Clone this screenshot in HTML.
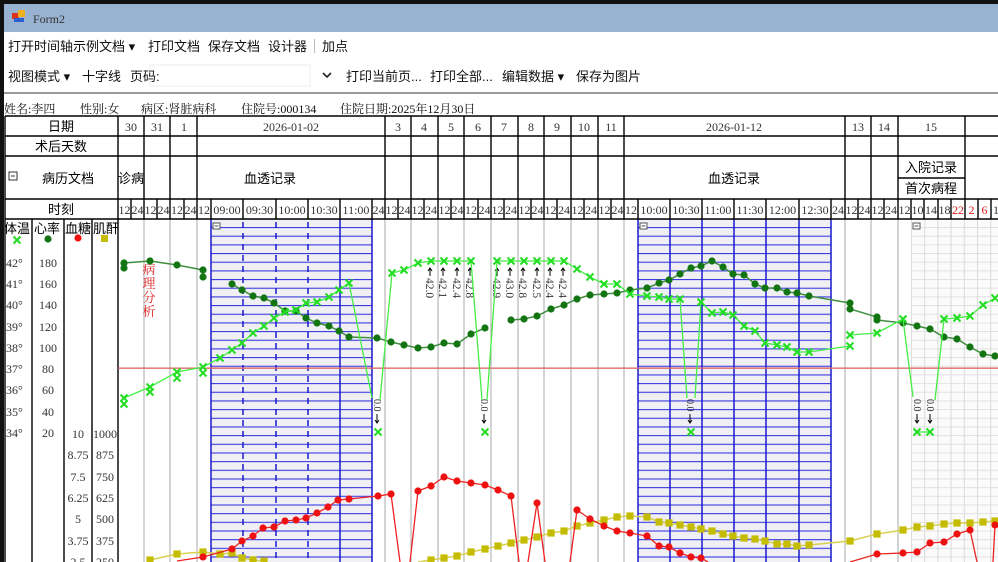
<!DOCTYPE html>
<html><head><meta charset="utf-8"><style>
html,body{margin:0;padding:0;background:#fff;}
body{width:998px;height:562px;overflow:hidden;position:relative;}
svg{position:absolute;left:0;top:0;}
.ui{font-family:"Liberation Sans","Noto Sans CJK SC",sans-serif;font-size:13px;fill:#111;}
.sr{font-family:"Liberation Serif","Noto Serif CJK SC",serif;font-size:12px;fill:#333;}
.hd{font-family:"Liberation Sans","Noto Sans CJK SC",sans-serif;font-size:13px;fill:#000;}
</style></head><body>
<svg width="998" height="562" viewBox="0 0 998 562" xmlns="http://www.w3.org/2000/svg">
<defs>
<pattern id="hb" x="0" y="227" width="10" height="8.67" patternUnits="userSpaceOnUse">
<rect width="10" height="8.67" fill="#f0f0f4"/><rect y="0" width="10" height="1.1" fill="#3a3ae0"/></pattern>
<pattern id="lg" x="911" y="227" width="13.2" height="8.67" patternUnits="userSpaceOnUse">
<rect width="13.2" height="8.67" fill="#fbfbfb"/><rect width="13.2" height="1" fill="#e2e2e2"/><rect width="1" height="8.67" fill="#dcdcdc"/></pattern>
<g id="x"><path d="M-3.5,-3.5L3.5,3.5M3.5,-3.5L-3.5,3.5" stroke="#22dd22" stroke-width="2"/></g>
<circle id="d" r="3.6" fill="#127512"/>
<circle id="r" r="3.6" fill="#ee1111"/>
<rect id="s" x="-3.6" y="-3.6" width="7.2" height="7.2" fill="#c4bc00"/>
<g id="ar"><path d="M0,-4V4M-2,-1L0,-4L2,-1" stroke="#000" stroke-width="1" fill="none"/></g>
</defs>
<rect x="0" y="0" width="998" height="4" fill="#111"/>
<rect x="0" y="0" width="4" height="562" fill="#111"/>
<rect x="4" y="4" width="994" height="28" fill="#98b3d1"/>
<rect x="12" y="13" width="7" height="6" fill="#e03020"/><rect x="18" y="10" width="7" height="7" fill="#f0b020"/><rect x="14" y="18" width="10" height="4" fill="#3060d0"/>
<text x="33" y="23" font-family="Liberation Serif,serif" font-size="12" fill="#333">Form2</text>
<text class="ui" x="8" y="51">打开时间轴示例文档 ▾</text>
<text class="ui" x="148" y="51">打印文档</text>
<text class="ui" x="208" y="51">保存文档</text>
<text class="ui" x="268" y="51">设计器</text>
<rect x="314" y="39" width="1" height="14" fill="#bbb"/>
<text class="ui" x="322" y="51">加点</text>
<text class="ui" x="8" y="81">视图模式 ▾</text>
<text class="ui" x="82" y="81">十字线</text>
<rect x="150" y="65" width="160" height="21" fill="#fff" stroke="#eee"/>
<text class="ui" x="130" y="81">页码:</text>
<path d="M323,73l4,4l4,-4" stroke="#222" stroke-width="1.6" fill="none"/>
<text class="ui" x="346" y="81">打印当前页...</text>
<text class="ui" x="430" y="81">打印全部...</text>
<text class="ui" x="502" y="81">编辑数据 ▾</text>
<text class="ui" x="576" y="81">保存为图片</text>
<rect x="4" y="92" width="994" height="2" fill="#999"/>
<g font-family="Liberation Serif,'Noto Serif CJK SC',serif" font-size="12" fill="#111">
<text x="4" y="113">姓名:李四</text><text x="80" y="113">性别:女</text><text x="141" y="113">病区:肾脏病科</text>
<text x="241" y="113">住院号:000134</text><text x="340" y="113">住院日期:2025年12月30日</text></g>
<rect x="211" y="219" width="161" height="343" fill="url(#hb)"/>
<rect x="638" y="219" width="193" height="343" fill="url(#hb)"/>
<rect x="911" y="219" width="87" height="343" fill="url(#lg)"/>
<g stroke="#aaa" stroke-width="1">
<path d="M144,219V562M170,219V562M197,219V562M385,219V562M411,219V562M438,219V562M464,219V562M491,219V562M518,219V562M544,219V562M571,219V562M598,219V562M624,219V562M845,219V562M871,219V562M898,219V562"/></g>
<g stroke="#1a1acc" stroke-width="1.5">
<path d="M211,219V562M340,219V562M372,219V562M638,219V562M670,219V562M702,219V562M734,219V562M766,219V562M799,219V562M831,219V562"/>
<path d="M243,222V562M276,222V562M308,222V562" stroke-dasharray="6,5"/></g>
<g fill="#fff" stroke="#555" stroke-width="1"><rect x="213" y="223" width="7" height="6"/><rect x="640" y="223" width="7" height="6"/><rect x="913" y="223" width="7" height="6"/></g>
<path d="M214.5,226h4M641.5,226h4M914.5,226h4" stroke="#555"/>
<g stroke="#000" stroke-width="1.4" fill="none">
<path d="M5,116H998M5,136H998M5,156H998M5,199H998M5,219H998"/>
<path d="M5,116V562M118,116V562M32,219V562M64,219V562M92,219V562"/>
<path d="M144,116V219M170,116V219M197,116V219M385,116V219M411,116V219M438,116V219M464,116V219M491,116V219M518,116V219M544,116V219M571,116V219M598,116V219M624,116V219M845,116V219M871,116V219M898,116V219M965,116V219"/>
<path d="M131,199V219M157,199V219M184,199V219M211,199V219M243,199V219M276,199V219M308,199V219M340,199V219M372,199V219M398,199V219M424,199V219M451,199V219M478,199V219M504,199V219M531,199V219M557,199V219M584,199V219M611,199V219M638,199V219M670,199V219M702,199V219M734,199V219M766,199V219M799,199V219M831,199V219M858,199V219M884,199V219M911,199V219M924,199V219M938,199V219M951,199V219M978,199V219M991,199V219"/>
<path d="M898,178H965"/>
</g>
<g class="hd" text-anchor="middle">
<text x="61" y="131">日期</text><text x="61" y="151">术后天数</text><text x="68" y="183">病历文档</text><text x="61" y="214">时刻</text>
<text x="270" y="183">血透记录</text><text x="734" y="183">血透记录</text>
<text x="931" y="172">入院记录</text><text x="931" y="193">首次病程</text>
</g>
<rect x="9" y="172" width="8" height="8" fill="#fff" stroke="#333"/><path d="M11,176h4" stroke="#333"/>
<text class="hd" x="118" y="183" font-size="12">诊病</text>
<g class="sr" text-anchor="middle">
<text x="131" y="131">30</text><text x="157" y="131">31</text><text x="184" y="131">1</text><text x="291" y="131">2026-01-02</text>
<text x="398" y="131">3</text><text x="424" y="131">4</text><text x="451" y="131">5</text><text x="478" y="131">6</text><text x="504" y="131">7</text><text x="531" y="131">8</text><text x="557" y="131">9</text><text x="584" y="131">10</text><text x="611" y="131">11</text>
<text x="734" y="131">2026-01-12</text><text x="858" y="131">13</text><text x="884" y="131">14</text><text x="931" y="131">15</text>
</g>
<g class="sr" font-size="11.5" text-anchor="middle" fill="#222">
<text x="124.5" y="214">12</text><text x="137.5" y="214">24</text><text x="150.5" y="214">12</text><text x="163.5" y="214">24</text><text x="177" y="214">12</text><text x="190.5" y="214">24</text><text x="204" y="214">12</text>
<text x="227" y="214">09:00</text><text x="259.5" y="214">09:30</text><text x="292" y="214">10:00</text><text x="324" y="214">10:30</text><text x="356" y="214">11:00</text><text x="378.5" y="214">24</text>
<text x="391.5" y="214">12</text><text x="404.5" y="214">24</text><text x="417.5" y="214">12</text><text x="431" y="214">24</text><text x="444.5" y="214">12</text><text x="457.5" y="214">24</text><text x="471" y="214">12</text><text x="484.5" y="214">24</text><text x="497.5" y="214">12</text><text x="511" y="214">24</text><text x="524.5" y="214">12</text><text x="537.5" y="214">24</text><text x="550.5" y="214">12</text><text x="564" y="214">24</text><text x="577.5" y="214">12</text><text x="591" y="214">24</text><text x="604.5" y="214">12</text><text x="617.5" y="214">24</text><text x="631" y="214">12</text>
<text x="654" y="214">10:00</text><text x="686" y="214">10:30</text><text x="718" y="214">11:00</text><text x="750" y="214">11:30</text><text x="782.5" y="214">12:00</text><text x="815" y="214">12:30</text><text x="838" y="214">24</text>
<text x="851.5" y="214">12</text><text x="864.5" y="214">24</text><text x="877.5" y="214">12</text><text x="891" y="214">24</text><text x="904.5" y="214">12</text><text x="917.5" y="214">10</text><text x="931" y="214">14</text><text x="944.5" y="214">18</text>
<text x="958" y="214" fill="#e02020">22</text><text x="971.5" y="214" fill="#e02020">2</text><text x="984.5" y="214" fill="#e02020">6</text><text x="996" y="214">1</text>
</g>
<g class="hd" font-size="12.5"><text x="4" y="233">体温</text><text x="34" y="233">心率</text><text x="65" y="233">血糖</text><text x="93" y="233">肌酐</text></g>
<use href="#x" x="17" y="240"/><circle cx="48" cy="239" r="3.6" fill="#127512"/><circle cx="78" cy="238" r="3.6" fill="#ee1111"/><rect x="101" y="235" width="7" height="7" fill="#c4bc00"/>
<g class="sr" font-size="12">
<text x="6" y="267">42°</text><text x="6" y="288">41°</text><text x="6" y="309">40°</text><text x="6" y="331">39°</text><text x="6" y="352">38°</text><text x="6" y="373">37°</text><text x="6" y="394">36°</text><text x="6" y="416">35°</text><text x="6" y="437">34°</text>
</g>
<g class="sr" font-size="12" text-anchor="middle">
<text x="48" y="267">180</text><text x="48" y="288">160</text><text x="48" y="309">140</text><text x="48" y="331">120</text><text x="48" y="352">100</text><text x="48" y="373">80</text><text x="48" y="394">60</text><text x="48" y="416">40</text><text x="48" y="437">20</text>
<text x="78" y="438">10</text><text x="78" y="459">8.75</text><text x="78" y="481">7.5</text><text x="78" y="502">6.25</text><text x="78" y="523">5</text><text x="78" y="545">3.75</text><text x="78" y="566">2.5</text>
<text x="105" y="438">1000</text><text x="105" y="459">875</text><text x="105" y="481">750</text><text x="105" y="502">625</text><text x="105" y="523">500</text><text x="105" y="545">375</text><text x="105" y="566">250</text>
</g>
<rect x="118" y="367.5" width="880" height="1.3" fill="#e06060"/>
<g font-family="'Noto Serif CJK SC',serif" font-size="13" fill="#e02020" text-anchor="middle">
<text x="149" y="274">病</text><text x="149" y="288">理</text><text x="149" y="302">分</text><text x="149" y="316">析</text></g>
<g font-family="Liberation Serif,serif" font-size="11.5" fill="#333">
<text transform="translate(426,278) rotate(90)">42.0</text><text transform="translate(439,278) rotate(90)">42.1</text><text transform="translate(453,278) rotate(90)">42.4</text><text transform="translate(466,278) rotate(90)">42.8</text>
<text transform="translate(493,278) rotate(90)">42.9</text><text transform="translate(506,278) rotate(90)">43.0</text><text transform="translate(519,278) rotate(90)">42.8</text><text transform="translate(533,278) rotate(90)">42.5</text><text transform="translate(546,278) rotate(90)">42.4</text><text transform="translate(559,278) rotate(90)">42.4</text>
<text transform="translate(374,399) rotate(90)" font-size="10">0.0</text><text transform="translate(481,399) rotate(90)" font-size="10">0.0</text><text transform="translate(687,399) rotate(90)" font-size="10">0.0</text><text transform="translate(914,399) rotate(90)" font-size="10">0.0</text><text transform="translate(927,399) rotate(90)" font-size="10">0.0</text>
</g>
<g><use href="#ar" x="430" y="272"/><use href="#ar" x="443" y="272"/><use href="#ar" x="457" y="272"/><use href="#ar" x="470" y="272"/><use href="#ar" x="497" y="272"/><use href="#ar" x="510" y="272"/><use href="#ar" x="523" y="272"/><use href="#ar" x="537" y="272"/><use href="#ar" x="550" y="272"/><use href="#ar" x="563" y="272"/></g>
<g stroke="#000" stroke-width="1" fill="none"><path d="M377,414v9M375,420l2,3l2,-3M484,414v9M482,420l2,3l2,-3M690,414v9M688,420l2,3l2,-3M917,414v9M915,420l2,3l2,-3M930,414v9M928,420l2,3l2,-3"/></g>
<g fill="none" stroke="#3f8f3f" stroke-width="1.5">
<polyline points="124,263 150,261 177,265 203,270"/>
<polyline points="232,284 242,290 253,296 264,298 274,303 285,311 296,311 306,318 317,323 329,326 339,331 349,337 377,338 391,342 404,345 418,348 431,347 444,343 457,344 471,334 485,328"/>
<polyline points="511,320 524,319 537,316 551,309 564,305 577,299 590,295 604,294 617,293 630,290 647,288 659,283 669,280 680,274 691,268 701,266 712,261 723,267 733,274 744,275 755,284 765,288 777,288 787,292 797,293 809,296 850,303 850,309 877,317 877,320 903,323 917,326 930,329 944,337 957,339 970,347 983,354 995,356"/>
</g>
<g>
<use href="#d" x="124" y="263"/><use href="#d" x="124" y="268"/><use href="#d" x="150" y="261"/><use href="#d" x="177" y="265"/><use href="#d" x="203" y="270"/><use href="#d" x="203" y="277"/>
<use href="#d" x="232" y="284"/><use href="#d" x="242" y="290"/><use href="#d" x="253" y="296"/><use href="#d" x="264" y="298"/><use href="#d" x="274" y="303"/><use href="#d" x="285" y="311"/><use href="#d" x="296" y="311"/><use href="#d" x="306" y="318"/><use href="#d" x="317" y="323"/><use href="#d" x="329" y="326"/><use href="#d" x="339" y="331"/><use href="#d" x="349" y="337"/><use href="#d" x="377" y="338"/><use href="#d" x="391" y="342"/><use href="#d" x="404" y="345"/><use href="#d" x="418" y="348"/><use href="#d" x="431" y="347"/><use href="#d" x="444" y="343"/><use href="#d" x="457" y="344"/><use href="#d" x="471" y="334"/><use href="#d" x="485" y="328"/>
<use href="#d" x="511" y="320"/><use href="#d" x="524" y="319"/><use href="#d" x="537" y="316"/><use href="#d" x="551" y="309"/><use href="#d" x="564" y="305"/><use href="#d" x="577" y="299"/><use href="#d" x="590" y="295"/><use href="#d" x="604" y="294"/><use href="#d" x="617" y="293"/><use href="#d" x="630" y="290"/><use href="#d" x="647" y="288"/><use href="#d" x="659" y="283"/><use href="#d" x="669" y="280"/><use href="#d" x="680" y="274"/><use href="#d" x="691" y="268"/><use href="#d" x="701" y="266"/><use href="#d" x="712" y="261"/><use href="#d" x="723" y="267"/><use href="#d" x="733" y="274"/><use href="#d" x="744" y="275"/><use href="#d" x="755" y="284"/><use href="#d" x="765" y="288"/><use href="#d" x="777" y="288"/><use href="#d" x="787" y="292"/><use href="#d" x="797" y="293"/><use href="#d" x="809" y="296"/><use href="#d" x="850" y="303"/><use href="#d" x="850" y="309"/><use href="#d" x="877" y="317"/><use href="#d" x="877" y="320"/><use href="#d" x="903" y="323"/><use href="#d" x="917" y="326"/><use href="#d" x="930" y="329"/><use href="#d" x="944" y="337"/><use href="#d" x="957" y="339"/><use href="#d" x="970" y="347"/><use href="#d" x="983" y="354"/><use href="#d" x="995" y="356"/>
</g>
<g fill="none" stroke="#44ee44" stroke-width="1.3">
<polyline points="124,398 150,387 177,372 203,367 220,358 232,350 242,343 253,333 264,326 274,318 285,312 296,310 306,303 317,302 329,297 339,290 349,283 372,398"/>
<polyline points="380,400 392,273 404,270 418,263 431,261 444,261 457,261 471,261 482,400"/>
<polyline points="487,400 497,261 511,261 524,261 537,261 551,261 564,261 577,269 590,277 604,284 617,284 630,294 647,296 659,297 669,299 680,299 687,398"/>
<polyline points="695,398 701,302 712,313 723,312 733,315 744,326 755,331 765,343 777,345 787,347 797,352 809,352 850,346"/>
<polyline points="850,335 877,333 903,319 913,397"/>
<polyline points="917,432 930,432"/>
<polyline points="935,400 944,319 957,318 970,316 983,305 995,298"/>
</g>
<g>
<use href="#x" x="124" y="398"/><use href="#x" x="124" y="404"/><use href="#x" x="150" y="387"/><use href="#x" x="150" y="392"/><use href="#x" x="177" y="372"/><use href="#x" x="177" y="378"/><use href="#x" x="203" y="367"/><use href="#x" x="203" y="373"/>
<use href="#x" x="220" y="358"/><use href="#x" x="232" y="350"/><use href="#x" x="242" y="343"/><use href="#x" x="253" y="333"/><use href="#x" x="264" y="326"/><use href="#x" x="274" y="318"/><use href="#x" x="285" y="312"/><use href="#x" x="296" y="310"/><use href="#x" x="306" y="303"/><use href="#x" x="317" y="302"/><use href="#x" x="329" y="297"/><use href="#x" x="339" y="290"/><use href="#x" x="349" y="283"/><use href="#x" x="378" y="432"/>
<use href="#x" x="392" y="273"/><use href="#x" x="404" y="270"/><use href="#x" x="418" y="263"/><use href="#x" x="431" y="261"/><use href="#x" x="444" y="261"/><use href="#x" x="457" y="261"/><use href="#x" x="471" y="261"/><use href="#x" x="485" y="432"/>
<use href="#x" x="497" y="261"/><use href="#x" x="511" y="261"/><use href="#x" x="524" y="261"/><use href="#x" x="537" y="261"/><use href="#x" x="551" y="261"/><use href="#x" x="564" y="261"/><use href="#x" x="577" y="269"/><use href="#x" x="590" y="277"/><use href="#x" x="604" y="284"/><use href="#x" x="617" y="284"/><use href="#x" x="630" y="294"/><use href="#x" x="647" y="296"/><use href="#x" x="659" y="297"/><use href="#x" x="669" y="299"/><use href="#x" x="680" y="299"/><use href="#x" x="691" y="432"/>
<use href="#x" x="701" y="302"/><use href="#x" x="712" y="313"/><use href="#x" x="723" y="312"/><use href="#x" x="733" y="315"/><use href="#x" x="744" y="326"/><use href="#x" x="755" y="331"/><use href="#x" x="765" y="343"/><use href="#x" x="777" y="345"/><use href="#x" x="787" y="347"/><use href="#x" x="797" y="352"/><use href="#x" x="809" y="352"/><use href="#x" x="850" y="346"/><use href="#x" x="850" y="335"/><use href="#x" x="877" y="333"/><use href="#x" x="903" y="319"/><use href="#x" x="917" y="432"/><use href="#x" x="930" y="432"/>
<use href="#x" x="944" y="319"/><use href="#x" x="957" y="318"/><use href="#x" x="970" y="316"/><use href="#x" x="983" y="305"/><use href="#x" x="995" y="298"/>
</g>
<polyline fill="none" stroke="#d8d050" stroke-width="1.5" points="150,560 177,554 203,552 220,554 232,553 242,558 253,560 264,561"/>
<polyline fill="none" stroke="#d8d050" stroke-width="1.5" points="418,562 431,560 444,558 457,556 471,552 485,549 498,546 511,543 524,540 537,537 551,533 564,531 577,526 590,523 604,520 617,517 630,516 647,517 659,522 669,523 680,525 691,527 701,529 712,531 723,534 733,536 744,538 755,539 765,541 777,544 787,544 797,546 809,545 850,541 877,534 903,530 917,527 930,526 944,524 957,523 970,523 983,522 995,521"/>
<g>
<use href="#s" x="150" y="560"/><use href="#s" x="177" y="554"/><use href="#s" x="203" y="552"/><use href="#s" x="220" y="554"/><use href="#s" x="232" y="553"/><use href="#s" x="242" y="558"/><use href="#s" x="253" y="560"/><use href="#s" x="264" y="561"/>
<use href="#s" x="431" y="560"/><use href="#s" x="444" y="558"/><use href="#s" x="457" y="556"/><use href="#s" x="471" y="552"/><use href="#s" x="485" y="549"/><use href="#s" x="498" y="546"/><use href="#s" x="511" y="543"/><use href="#s" x="524" y="540"/><use href="#s" x="537" y="537"/><use href="#s" x="551" y="533"/><use href="#s" x="564" y="531"/><use href="#s" x="577" y="526"/><use href="#s" x="590" y="523"/><use href="#s" x="604" y="520"/><use href="#s" x="617" y="517"/><use href="#s" x="630" y="516"/><use href="#s" x="647" y="517"/><use href="#s" x="659" y="522"/><use href="#s" x="669" y="523"/><use href="#s" x="680" y="525"/><use href="#s" x="691" y="527"/><use href="#s" x="701" y="529"/><use href="#s" x="712" y="531"/><use href="#s" x="723" y="534"/><use href="#s" x="733" y="536"/><use href="#s" x="744" y="538"/><use href="#s" x="755" y="539"/><use href="#s" x="765" y="541"/><use href="#s" x="777" y="544"/><use href="#s" x="787" y="544"/><use href="#s" x="797" y="546"/><use href="#s" x="809" y="545"/><use href="#s" x="850" y="541"/><use href="#s" x="877" y="534"/><use href="#s" x="903" y="530"/><use href="#s" x="917" y="527"/><use href="#s" x="930" y="526"/><use href="#s" x="944" y="524"/><use href="#s" x="957" y="523"/><use href="#s" x="970" y="523"/><use href="#s" x="983" y="522"/><use href="#s" x="995" y="521"/>
</g>
<g fill="none" stroke="#ee2222" stroke-width="1.3">
<polyline points="177,561 203,557 232,549 242,541 253,536 263,528 274,527 285,521 296,520 306,518 317,513 328,507 338,500 349,499 378,496 391,494 400,562"/>
<polyline points="410,562 418,491 431,486 444,477 457,481 471,483 485,485 498,490 511,496 519,562"/>
<polyline points="528,562 537,503 545,562"/>
<polyline points="570,562 577,510 590,519 604,526 617,531 630,533 647,536 659,546 669,547 680,553 691,557 701,558 708,562"/>
<polyline points="850,562 877,554 903,553 917,552 930,543 944,542 957,534 970,530 977,562"/>
<polyline points="993,562 995,525"/>
</g>
<g>
<use href="#r" x="203" y="557"/><use href="#r" x="232" y="549"/><use href="#r" x="242" y="541"/><use href="#r" x="253" y="536"/><use href="#r" x="263" y="528"/><use href="#r" x="274" y="527"/><use href="#r" x="285" y="521"/><use href="#r" x="296" y="520"/><use href="#r" x="306" y="518"/><use href="#r" x="317" y="513"/><use href="#r" x="328" y="507"/><use href="#r" x="338" y="500"/><use href="#r" x="349" y="499"/><use href="#r" x="378" y="496"/><use href="#r" x="391" y="494"/>
<use href="#r" x="418" y="491"/><use href="#r" x="431" y="486"/><use href="#r" x="444" y="477"/><use href="#r" x="457" y="481"/><use href="#r" x="471" y="483"/><use href="#r" x="485" y="485"/><use href="#r" x="498" y="490"/><use href="#r" x="511" y="496"/><use href="#r" x="537" y="503"/>
<use href="#r" x="577" y="510"/><use href="#r" x="590" y="519"/><use href="#r" x="604" y="526"/><use href="#r" x="617" y="531"/><use href="#r" x="630" y="533"/><use href="#r" x="647" y="536"/><use href="#r" x="659" y="546"/><use href="#r" x="669" y="547"/><use href="#r" x="680" y="553"/><use href="#r" x="691" y="557"/><use href="#r" x="701" y="558"/>
<use href="#r" x="877" y="554"/><use href="#r" x="903" y="553"/><use href="#r" x="917" y="552"/><use href="#r" x="930" y="543"/><use href="#r" x="944" y="542"/><use href="#r" x="957" y="534"/><use href="#r" x="970" y="530"/><use href="#r" x="995" y="525"/>
</g>
</svg>
</body></html>
